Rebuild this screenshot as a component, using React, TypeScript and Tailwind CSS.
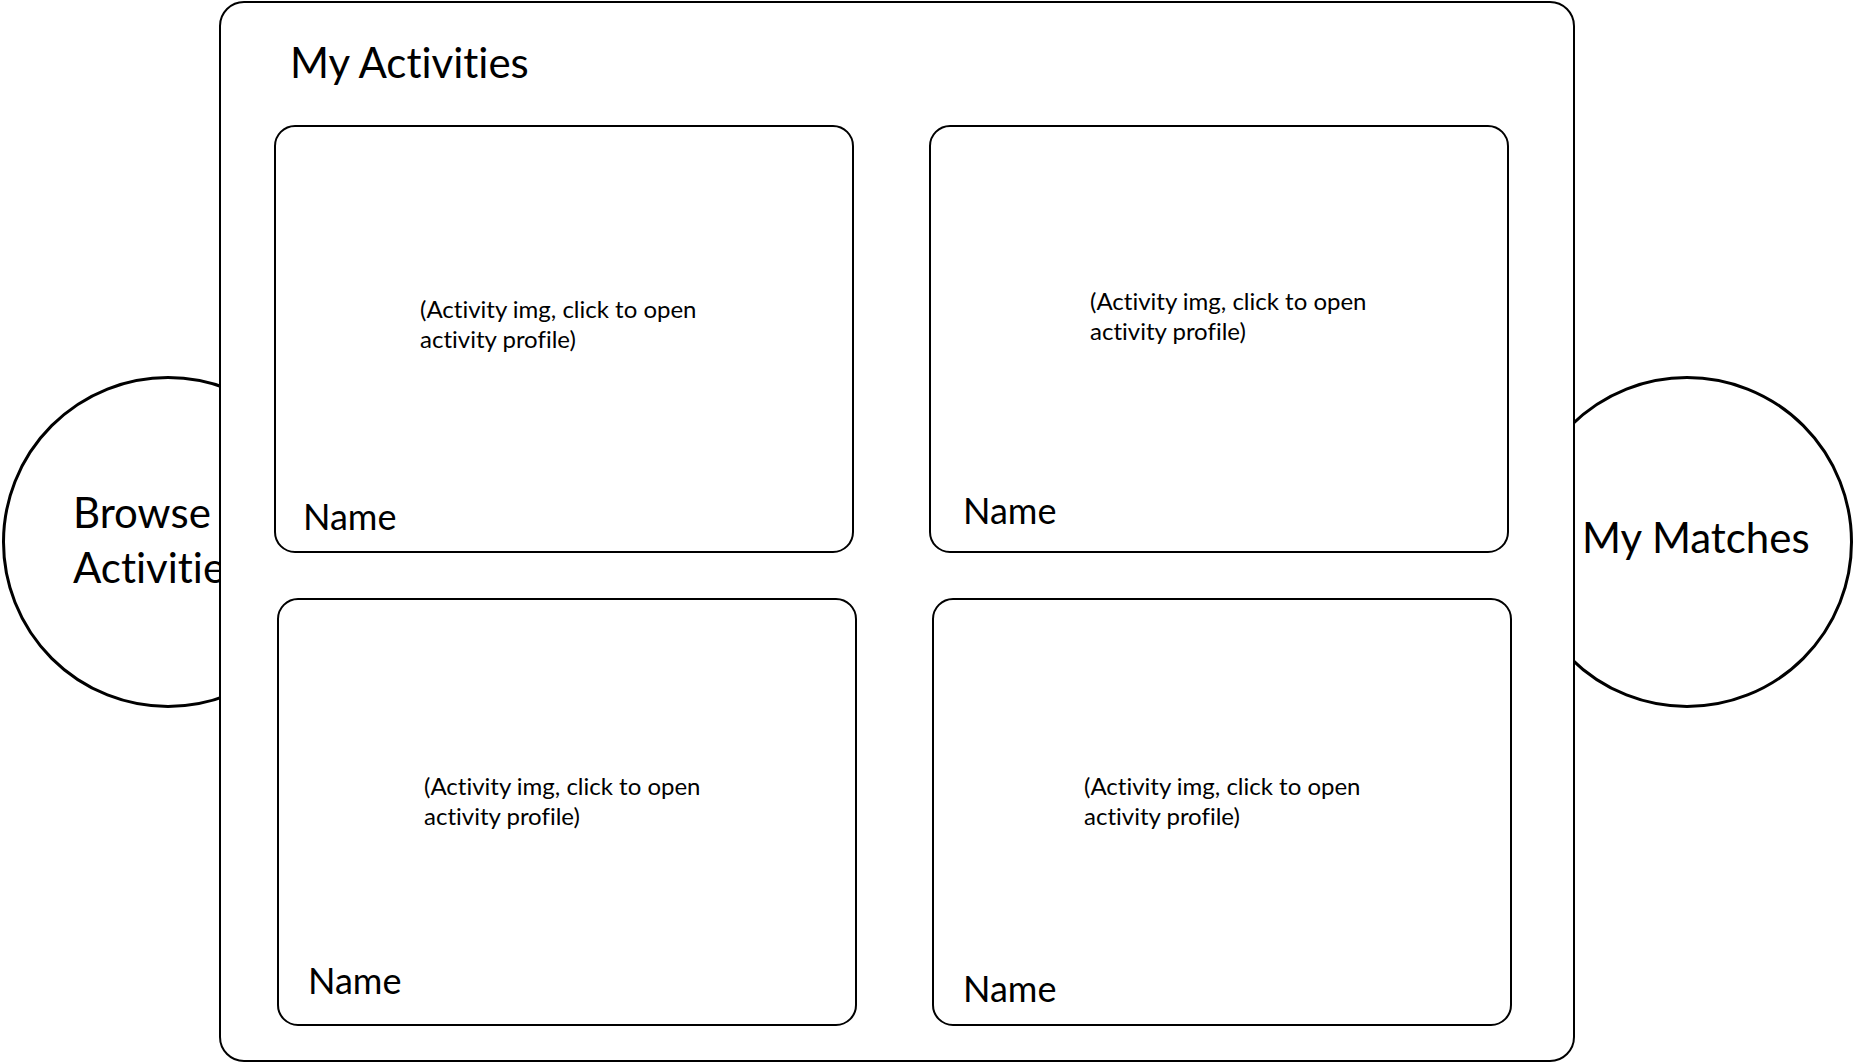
import React from "react";

type CardProps = {
  textPl: string;
  textPt: string;
  namePl: string;
  namePb: string;
};

function Card({ textPl, textPt, namePl, namePb }: CardProps) {
  return (
    <div className="flex h-[428px] w-[580px] shrink-0 flex-col rounded-[21px] border-2 border-black bg-white">
      <div className={`${textPl} ${textPt} text-[24px] leading-[30px] text-black`}>
        <div>(Activity img, click to open</div>
        <div>activity profile)</div>
      </div>
      <div className={`mt-auto ${namePl} ${namePb} text-[36px] leading-none text-black`}>Name</div>
    </div>
  );
}

export default function App() {
  return (
    <div
      className="flex h-[1063px] w-[1853px] items-start overflow-hidden bg-white pl-[2px] [font-variant-ligatures:none]"
      style={{ fontFamily: "Lato, 'Open Sans', sans-serif" }}
    >
      {/* Browse Activities circle */}
      <div className="mt-[376px] h-[332px] w-[332px] shrink-0 rounded-full border-[3px] border-black pl-[68px] pt-[106px] text-[42px] leading-[55px] text-black">
        <div>Browse</div>
        <div className="whitespace-nowrap">Activities</div>
      </div>

      {/* Main panel */}
      <div className="relative z-10 -ml-[115px] mt-[1px] flex h-[1061px] w-[1356px] shrink-0 flex-col rounded-[25px] border-2 border-black bg-white">
        <div className="pl-[69px] pt-[38px] text-[42px] leading-none text-black">My Activities</div>

        <div className="mt-[42px] flex gap-[75px] pl-[53px]">
          <Card textPl="pl-[144px]" textPt="pt-[167px]" namePl="pl-[27px]" namePb="pb-[17px]" />
          <Card textPl="pl-[159px]" textPt="pt-[159px]" namePl="pl-[32px]" namePb="pb-[23px]" />
        </div>

        <div className="mt-[45px] flex gap-[75px] pl-[56px]">
          <Card textPl="pl-[145px]" textPt="pt-[171px]" namePl="pl-[29px]" namePb="pb-[26px]" />
          <Card textPl="pl-[150px]" textPt="pt-[171px]" namePl="pl-[29px]" namePb="pb-[18px]" />
        </div>
      </div>

      {/* My Matches circle */}
      <div className="-ml-[54px] mt-[376px] h-[332px] w-[332px] shrink-0 rounded-full border-[3px] border-black pl-[58px] pt-[137px] text-[42px] leading-none whitespace-nowrap text-black">
        My Matches
      </div>
    </div>
  );
}
